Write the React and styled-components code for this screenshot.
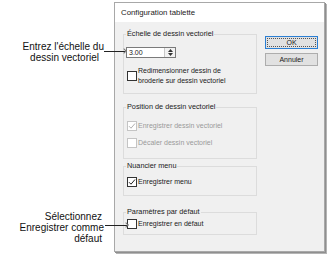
import React from 'react'
import styled, { createGlobalStyle } from 'styled-components'

const Global = createGlobalStyle`
  html, body { margin: 0; padding: 0; background: #fff; }
  body { font-family: "Liberation Sans", Arial, sans-serif; }
`

const Page = styled.div`
  width: 334px;
  height: 270px;
  display: flex;
  align-items: flex-start;
  overflow: hidden;
`

const Notes = styled.div`
  width: 114px;
  display: flex;
  flex-direction: column;
  font-size: 10px;
  line-height: 11px;
  color: #111;
`

const Callout = styled.div`
  position: relative;
  margin-top: ${p => p.top}px;
  padding-right: 10px;
  text-align: right;
  span { display: block; }
`

const Line = styled.span`
  padding-right: ${p => p.indent || 0}px;
`

const Leader = styled.i`
  position: absolute;
  z-index: 2;
  left: ${p => p.from}px;
  top: ${p => p.y}px;
  width: ${p => p.len}px;
  height: 1px;
  background: #222;
  &::after {
    content: '';
    position: absolute;
    right: -1px;
    top: -2px;
    width: 3px;
    height: 3px;
    border-top: 1px solid #777;
    border-right: 1px solid #777;
    transform: rotate(45deg);
  }
`

const Dialog = styled.div`
  margin-top: 2px;
  width: 209px;
  height: 248px;
  border: 1px solid #a8a8a8;
  box-shadow: 1px 1px 0 #8f8f8f, 2px 2px 0 #b4b4b4;
  background: #f0f0f0;
  display: flex;
  flex-direction: column;
  font-size: 7px;
  color: #1a1a1a;
`

const TitleBar = styled.div`
  height: 19px;
  background: #fff;
  padding-left: 6px;
  display: flex;
  align-items: center;
  font-size: 7.8px;
  color: #222;
`

const Body = styled.div`
  flex: 1;
  display: grid;
  grid-template-columns: 134px 53px;
  column-gap: 8px;
  padding: 8px 0 0 8px;
  align-items: start;
`

const Groups = styled.div`
  display: flex;
  flex-direction: column;
`

const Group = styled.fieldset`
  box-sizing: border-box;
  margin: ${p => p.gap || 0}px 0 0;
  height: ${p => p.h}px;
  border: 1px solid #dcdcdc;
  padding: 0 0 0 1px;
  min-width: 0;
`

const Legend = styled.legend`
  padding: 0 1px;
  margin-left: 1px;
  line-height: 8px;
  font-size: 7.3px;
  color: #1a1a1a;
`

const Spinner = styled.div`
  margin: ${p => p.top}px 0 0 1px;
  width: 46px;
  height: 9px;
  border: 1px solid #7a7a7a;
  background: #fff;
  display: flex;
  align-items: center;
  justify-content: space-between;
  padding-left: 2px;
  line-height: 9px;
`

const SpinButtons = styled.div`
  width: 8px;
  height: 9px;
  border-left: 1px solid #c8c8c8;
  background: #f2f2f2;
  display: flex;
  flex-direction: column;
  align-items: center;
  justify-content: space-around;
  padding: 0 1px;
`

const Row = styled.label`
  margin: ${p => p.top}px 0 0 2px;
  display: flex;
  align-items: center;
  gap: 1px;
  line-height: 10px;
  color: ${p => (p.disabled ? '#9a9a9a' : '#1a1a1a')};
`

const Box = styled.span`
  box-sizing: border-box;
  flex: none;
  width: 10px;
  height: 10px;
  border: 1px solid ${p => (p.disabled ? '#c4c4c4' : '#333')};
  background: #fff;
  display: flex;
  align-items: center;
  justify-content: center;
`

const Buttons = styled.div`
  margin-top: 6px;
  display: flex;
  flex-direction: column;
  gap: 4px;
`

const Button = styled.div`
  box-sizing: border-box;
  height: 13px;
  border: 1px solid ${p => (p.primary ? '#2b7fd4' : '#adadad')};
  background: #e1e1e1;
  display: flex;
  align-items: center;
  justify-content: center;
  font-size: 7px;
  color: #1a1a1a;
  span {
    ${p => p.primary && `
      flex: 1;
      align-self: stretch;
      margin: 1px;
      border: 1px dotted #555;
      display: flex;
      align-items: center;
      justify-content: center;
    `}
  }
`

const Check = ({ color }) => (
  <svg width="8" height="8" viewBox="0 0 8 8">
    <path d="M1 4.2 L3 6.2 L7 1.5" fill="none" stroke={color} strokeWidth="1" />
  </svg>
)

const Arrow = ({ up }) => (
  <svg width="5" height="3" viewBox="0 0 5 3">
    <path d={up ? 'M0 3 L2.5 0 L5 3 Z' : 'M0 0 L2.5 3 L5 0 Z'} fill="#333" />
  </svg>
)

const CheckRow = ({ top, checked, disabled, children }) => (
  <Row top={top} disabled={disabled}>
    <Box disabled={disabled}>{checked && <Check color={disabled ? '#b0b0b0' : '#222'} />}</Box>
    <span>{children}</span>
  </Row>
)

export default function App() {
  return (
    <Page>
      <Global />
      <Notes>
        <Callout top={41}>
          <Line>Entrez l'échelle du</Line>
          <Line indent={5}>dessin vectoriel</Line>
          <Leader from={104} y={10} len={21} />
        </Callout>
        <Callout top={148}>
          <Line indent={2}>Sélectionnez</Line>
          <Line>Enregistrer comme</Line>
          <Line indent={2}>défaut</Line>
          <Leader from={105} y={14} len={22} />
        </Callout>
      </Notes>
      <Dialog>
        <TitleBar>Configuration tablette</TitleBar>
        <Body>
          <Groups>
            <Group h={64}>
              <Legend>Échelle de dessin vectoriel</Legend>
              <Spinner top={9}>
                <span>3.00</span>
                <SpinButtons>
                  <Arrow up />
                  <Arrow />
                </SpinButtons>
              </Spinner>
              <CheckRow top={8}>
                Redimensionner dessin de<br />broderie sur dessin vectoriel
              </CheckRow>
            </Group>
            <Group h={56} gap={9}>
              <Legend>Position de dessin vectoriel</Legend>
              <CheckRow top={10} checked disabled>Enregistrer dessin vectoriel</CheckRow>
              <CheckRow top={7} disabled>Décaler dessin vectoriel</CheckRow>
            </Group>
            <Group h={34} gap={3}>
              <Legend>Nuancier menu</Legend>
              <CheckRow top={7} checked>Enregistrer menu</CheckRow>
            </Group>
            <Group h={27} gap={12}>
              <Legend>Paramètres par défaut</Legend>
              <CheckRow top={3}>Enregistrer en défaut</CheckRow>
            </Group>
          </Groups>
          <Buttons>
            <Button primary><span>OK</span></Button>
            <Button>Annuler</Button>
          </Buttons>
        </Body>
      </Dialog>
    </Page>
  )
}
